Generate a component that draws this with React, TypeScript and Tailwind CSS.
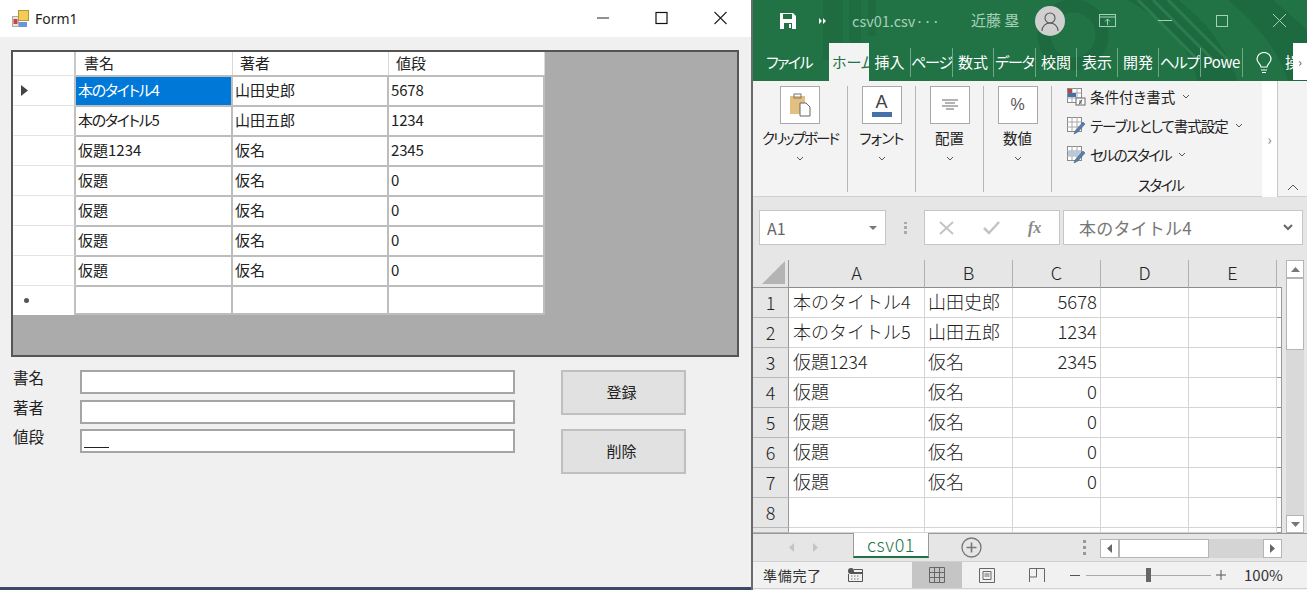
import React from "react";

const gridRows = [
  ["本のタイトル4", "山田史郎", "5678"],
  ["本のタイトル5", "山田五郎", "1234"],
  ["仮題1234", "仮名", "2345"],
  ["仮題", "仮名", "0"],
  ["仮題", "仮名", "0"],
  ["仮題", "仮名", "0"],
  ["仮題", "仮名", "0"],
  ["", "", ""],
];

const ribbonTabs = [
  { label: "挿入", w: "w-[42px]" },
  { label: "ページ", w: "w-[42px] tracking-[-1.200px]" },
  { label: "数式", w: "w-[41px]" },
  { label: "データ", w: "w-[42px] tracking-[-1.200px]" },
  { label: "校閲", w: "w-[41px]" },
  { label: "表示", w: "w-[41px]" },
  { label: "開発", w: "w-[41px]" },
  { label: "ヘルプ", w: "w-[42px] tracking-[-1.200px]" },
  { label: "Powe", w: "w-[42px] tracking-[-0.300px]" },
];

const FormIcon = () => (
  <svg width="17" height="18" viewBox="0 0 17 18" className="shrink-0">
    <rect x="0.5" y="6.500" width="6" height="10" fill="#e4e4e4" stroke="#aaa" />
    <rect x="1.500" y="9" width="4" height="5" fill="#d2403a" />
    <rect x="6.500" y="0.500" width="10" height="10" fill="#f2cc55" stroke="#b9953a" />
    <rect x="7" y="12" width="8" height="5" fill="#6a94dc" />
  </svg>
);

const Label = ({ text }: { text: string }) => (
  <div className="h-[29.5px] text-[15.500px] leading-[16px] text-[#222]">{text}</div>
);

const Field = ({ children }: { children?: React.ReactNode }) => (
  <div className="flex h-[24px] w-[435px] items-end border-2 border-[#a5a5a5] bg-white pb-[2px] pl-[2px]">{children}</div>
);

const FormWindow = () => (
  <div className="flex h-[587px] w-[751px] shrink-0 flex-col bg-[#f0f0f0]">
    <div className="flex h-[37px] shrink-0 items-center bg-white pl-[12px]">
      <FormIcon />
      <span className="ml-[6px] text-[14px] text-[#222] [font-family:'Noto_Sans',sans-serif]">Form1</span>
      <div className="ml-auto flex items-center">
        <svg width="60" height="37" viewBox="0 0 60 37"><path d="M25 18h12" stroke="#222" strokeWidth="1" /></svg>
        <svg width="59" height="37" viewBox="0 0 59 37"><rect x="24" y="12.5" width="11" height="11" fill="none" stroke="#111" strokeWidth="1.2" /></svg>
        <svg width="60" height="37" viewBox="0 0 60 37"><path d="M23.500 12l12 12M35.500 12l-12 12" stroke="#222" strokeWidth="1.1" /></svg>
      </div>
    </div>
    <div className="ml-[11px] mt-[13px] h-[307px] w-[728px] border-2 border-[#555] bg-[#ababab]">
      <div className="grid w-[532px] grid-cols-[63px_157px_156px_156px] bg-white text-[15px] text-[#222]">
        <div className="h-[23px] border-r-2 border-[#c8c8c8]" />
        {["書名", "著者", "値段"].map((h, i) => (
          <div key={h} className={`flex h-[23px] items-center border-r border-[#d8d8d8] ${i === 0 ? "pl-[8px]" : "pl-[7px]"}`}>{h}</div>
        ))}
        {gridRows.map((row, r) => (
          <React.Fragment key={r}>
            <div className="flex h-[30px] items-center border-t border-r-2 border-[#e3e3e3] border-r-[#c0c0c0] pl-[8px]">
              {r === 0 && (
                <svg width="7" height="11" viewBox="0 0 7 11"><path d="M0 0l7 5.500L0 11z" fill="#444" /></svg>
              )}
              {r === 7 && <span className="ml-[3px] h-[5px] w-[5px] rounded-full bg-[#555]" />}
            </div>
            {row.map((cell, c) => (
              <div
                key={c}
                className={`flex h-[30px] items-center border-r-2 border-t-2 border-[#bdbdbd] pb-[2px] pl-[2px] [font-feature-settings:'palt'] ${r === 7 ? "border-b-2" : ""} ${r === 0 && c === 0 ? "bg-[#0078d7] text-white" : ""} ${c === 2 ? "tracking-[-0.2px]" : ""} ${r < 2 && c === 0 ? "tracking-[-1.300px]" : ""}`}
              >
                {cell}
              </div>
            ))}
          </React.Fragment>
        ))}
      </div>
    </div>
    <div className="ml-[13px] mt-[13px] flex">
      <div className="-mt-[1px] w-[67px]">
        <Label text="書名" />
        <Label text="著者" />
        <Label text="値段" />
      </div>
      <div className="flex flex-col">
        <Field />
        <div className="mt-[6px]"><Field /></div>
        <div className="mt-[5px]">
          <Field>
            <span className="mb-[1px] block h-[1px] w-[25px] bg-[#222]" />
          </Field>
        </div>
      </div>
      <div className="ml-[46px] flex flex-col gap-[14px]">
        <button className="h-[45px] w-[125px] border-2 border-[#bfbfbf] bg-[#e1e1e1] pr-[4px] text-[15px] text-[#222]">登録</button>
        <button className="h-[45px] w-[125px] border-2 border-[#bfbfbf] bg-[#e1e1e1] pr-[4px] text-[15px] text-[#222]">削除</button>
      </div>
    </div>
  </div>
);

const Chevron = () => (
  <svg width="8" height="5" viewBox="0 0 8 5"><path d="M1 1l3 3 3-3" fill="none" stroke="#555" /></svg>
);

const RibbonGroup = ({ label, icon, className, labelClass = "" }: { label: string; icon: React.ReactNode; className: string; labelClass?: string }) => (
  <div className={`flex h-[106px] flex-col items-center border-r border-[#b5b5b5] ${className}`}>
    <div className="flex h-[38px] w-[40px] items-center justify-center border border-[#a9a9a9] bg-white">{icon}</div>
    <div className={`mt-[4px] whitespace-nowrap text-[14.500px] leading-[20px] text-[#222] [font-feature-settings:'palt'] ${labelClass}`}>{label}</div>
    <div className="mt-[8px] flex"><Chevron /></div>
  </div>
);

const StyleIcon = ({ kind }: { kind: number }) => (
  <svg width="19" height="18" viewBox="0 0 19 18" className="shrink-0">
    <rect x="0.5" y="0.5" width="14" height="14" fill="#fff" stroke="#8a8a8a" />
    <path d="M5 0v14M10 0v14M0 5h14M0 10h14" stroke="#a9a9a9" />
    {kind === 0 && (
      <>
        <rect x="1" y="1" width="4" height="4" fill="#b5473c" />
        <rect x="1" y="5" width="8" height="4" fill="#4472a8" />
        <rect x="9" y="10" width="9" height="7" fill="#fff" stroke="#666" />
        <path d="M12 13h3M12 15h3M15 11.5l-3 5" stroke="#444" strokeWidth="0.8" />
      </>
    )}
    {kind === 1 && <path d="M8 14L16 5l2 2-7 8-4 2z" fill="#4f7fb5" stroke="#555" strokeWidth="0.5" />}
    {kind === 2 && (
      <>
        <rect x="1" y="5" width="13" height="5" fill="#b9c8dc" />
        <path d="M8 14L16 5l2 2-7 8-4 2z" fill="#4f7fb5" stroke="#555" strokeWidth="0.5" />
      </>
    )}
  </svg>
);

const StyleItem = ({ label, kind, labelClass = "" }: { label: string; kind: number; labelClass?: string }) => (
  <div className="flex h-[29.5px] items-center whitespace-nowrap text-[14.500px] text-[#222] [font-feature-settings:'palt']">
    <StyleIcon kind={kind} />
    <span className={`ml-[4px] ${labelClass}`}>{label}</span>
    <span className="ml-[7px] flex"><Chevron /></span>
  </div>
);

const GreenPattern = () => (
  <svg className="absolute inset-0" width="555" height="81" viewBox="0 0 555 81">
    <path d="M70 0h20v60H70zM96 0h12v50H96zM115 0h8v36h-8z" fill="#1f6c41" />
    <path d="M375 0c50 30 60 50 70 81h40C470 40 450 20 425 0zM475 0c30 25 50 50 60 81h20V30L520 0z" fill="#1e6a40" />
    <circle cx="320" cy="35" r="29" fill="none" stroke="#1e6a40" strokeWidth="13" />
    <path d="M385 0l60 60M400 0l60 60M415 0l60 60" stroke="#2b7c4f" strokeWidth="3" />
  </svg>
);

const ExcelWindow = () => (
  <div className="flex h-[590px] min-w-0 flex-1 flex-col border-l-2 border-[#6a6a6a] bg-[#f3f3f3]">
    <div className="relative h-[81px] shrink-0 overflow-hidden bg-[#217346] text-white">
      <GreenPattern />
      <div className="relative flex h-[41px] items-center">
        <svg width="16" height="16" viewBox="0 0 16 16" className="ml-[27px]">
          <path d="M0 0h13l3 3v13H0z" fill="#fff" />
          <path d="M3 1h9v5H3z" fill="#217346" />
          <path d="M4 10h8v6H4z" fill="#217346" />
          <path d="M9 11h2v4H9z" fill="#fff" />
        </svg>
        <svg width="8" height="6" viewBox="0 0 8 6" className="ml-[23px]">
          <path d="M0 0l3 3-3 3zM4 0l3 3-3 3z" fill="#fff" />
        </svg>
        <span className="ml-[25px] w-[119px] whitespace-nowrap text-[14.500px] text-[#a6d0b8]">csv01.csv···</span>
        <span className="w-[64px] whitespace-nowrap text-[15px] text-[#a6d0b8]">近藤 塁</span>
        <div className="flex h-[30px] w-[30px] items-center justify-center rounded-full bg-[#d0d0d0]">
          <svg width="24" height="24" viewBox="0 0 24 24" fill="none" stroke="#555" strokeWidth="1.1">
            <circle cx="12" cy="9" r="5" />
            <path d="M4 22c0-5 4-8 8-8s8 3 8 8" />
          </svg>
        </div>
        <svg width="17" height="13" viewBox="0 0 17 13" className="ml-[34px]" fill="none" stroke="#a6d0b8">
          <rect x="0.5" y="0.5" width="16" height="12" />
          <path d="M0 3h17M8.500 11V5M6 7.500L8.500 5 11 7.500" />
        </svg>
        <span className="ml-[42px] h-[1px] w-[14px] bg-[#a6d0b8]" />
        <span className="ml-[44px] h-[12px] w-[12px] border border-[#a6d0b8]" />
        <svg width="13" height="13" viewBox="0 0 13 13" className="ml-[45px]"><path d="M0 0l13 13M13 0L0 13" stroke="#a6d0b8" /></svg>
      </div>
      <div className="relative flex h-[40px] items-end text-[15px] [font-feature-settings:'palt']">
        <div className="flex h-[38px] w-[72px] items-center justify-center tracking-[-1.500px]">ファイル</div>
        <div className="ml-[4px] flex h-[38px] w-[40px] shrink-0 items-center overflow-hidden whitespace-nowrap bg-[#f3f3f3] pl-[3px] text-[#217346]">ホーム</div>
        {ribbonTabs.map((t) => (
          <div key={t.label} className={`mb-[4px] flex h-[29px] shrink-0 items-center justify-center overflow-hidden whitespace-nowrap border-r border-[#6fa887] ${t.w}`}>
            {t.label}
          </div>
        ))}
        <div className="mb-[4px] flex h-[29px] w-[42px] shrink-0 items-center justify-center">
          <svg width="16" height="22" viewBox="0 0 16 22" fill="none" stroke="#fff" strokeWidth="1.2">
            <path d="M5 15c0-3-4-4-4-8a7 6.500 0 0 1 14 0c0 4-4 5-4 8z" />
            <path d="M5 18h6M6 20.500h4" />
          </svg>
        </div>
        <div className="mb-[4px] flex h-[29px] w-[8px] shrink-0 items-center overflow-hidden">操</div>
        <div className="mb-[1px] flex h-[37px] w-[14px] shrink-0 items-center justify-center self-end bg-white text-[12px] text-[#555]">›</div>
      </div>
    </div>

    <div className="flex h-[116px] shrink-0 border-b border-[#d0d0d0] pt-[5px]">
      <RibbonGroup
        label="クリップボード"
        className="w-[95px]"
        labelClass="tracking-[-1.900px]"
        icon={
          <svg width="22" height="24" viewBox="0 0 22 24">
            <rect x="1" y="3" width="15" height="18" fill="#e3bf82" />
            <rect x="5" y="1" width="7" height="4" fill="none" stroke="#777" />
            <path d="M11 10h6l4 4v9H11z" fill="#fff" stroke="#666" />
          </svg>
        }
      />
      <RibbonGroup
        label="フォント"
        className="w-[68px]"
        labelClass="tracking-[-0.800px]"
        icon={
          <div className="flex flex-col items-center leading-none">
            <span className="text-[18px] font-medium leading-[18px] text-[#444] [font-family:'Liberation_Sans',sans-serif]">A</span>
            <span className="mt-[1px] h-[5px] w-[20px] bg-[#4472a8]" />
          </div>
        }
      />
      <RibbonGroup
        label="配置"
        className="w-[68px]"
        icon={<svg width="18" height="12" viewBox="0 0 18 12"><path d="M1 1h16M4 4h10M1 7h16M5 10h8" stroke="#666" /></svg>}
      />
      <RibbonGroup
        label="数値"
        className="w-[68px]"
        icon={<span className="text-[16px] text-[#555] [font-family:'Liberation_Sans',sans-serif]">%</span>}
      />
      <div className="-mt-[4px] flex w-[210px] flex-col pl-[15px]">
        <StyleItem label="条件付き書式" kind={0} />
        <StyleItem label="テーブルとして書式設定" kind={1} labelClass="tracking-[-1px]" />
        <StyleItem label="セルのスタイル" kind={2} labelClass="tracking-[-1.800px]" />
        <div className="mt-[5px] pr-[8px] text-center text-[14.500px] tracking-[-1.800px] text-[#222] [font-feature-settings:'palt']">スタイル</div>
      </div>
      <div className="-mt-[5px] flex h-[116px] w-[16px] items-center justify-center border-r border-[#c8c8c8] bg-white text-[14px] text-[#777]">›</div>
      <div className="flex flex-1 items-end justify-center pb-[5px]">
        <svg width="12" height="7" viewBox="0 0 12 7"><path d="M1 6l5-5 5 5" fill="none" stroke="#555" /></svg>
      </div>
    </div>

    <div className="flex h-[63px] shrink-0 items-start bg-[#e6e6e6] pl-[6px] pt-[13px]">
      <div className="flex h-[35px] w-[127px] items-center justify-between border border-[#c6c6c6] bg-white pl-[7px] pr-[8px] text-[16px] text-[#666]">
        A1
        <svg width="8" height="4" viewBox="0 0 8 4"><path d="M0 0h8L4 4z" fill="#777" /></svg>
      </div>
      <div className="flex h-[35px] w-[38px] flex-col items-center justify-center gap-[2px]">
        <span className="h-[2px] w-[3px] bg-[#aaa]" /><span className="h-[3px] w-[3px] bg-[#aaa]" /><span className="h-[3px] w-[3px] bg-[#aaa]" />
      </div>
      <div className="flex h-[35px] w-[136px] items-center gap-[28px] border border-[#c6c6c6] bg-white pl-[14px]">
        <svg width="16" height="14" viewBox="0 0 16 14"><path d="M1 1l13 12M14 1L1 13" stroke="#c4c4c4" strokeWidth="2" /></svg>
        <svg width="17" height="14" viewBox="0 0 17 14"><path d="M1 7l5 5L16 1" fill="none" stroke="#c4c4c4" strokeWidth="2.500" /></svg>
        <span className="text-[16px] font-bold italic text-[#888] [font-family:'Liberation_Serif',serif]">fx</span>
      </div>
      <div className="ml-[3px] flex h-[35px] flex-1 items-center justify-between border border-[#c6c6c6] bg-white pl-[15px] pr-[9px] text-[17px] tracking-[0.2px] text-[#777]">
        本のタイトル4
        <svg width="10" height="7" viewBox="0 0 10 7"><path d="M1 1l4 4 4-4" fill="none" stroke="#666" strokeWidth="2" /></svg>
      </div>
      <div className="w-[4px]" />
    </div>

    <div className="flex h-[273px] shrink-0 overflow-hidden bg-[#e6e6e6]">
      <div className="w-[529px] shrink-0 overflow-hidden">
        <div className="grid grid-cols-[36px_136px_88px_88px_88px_88px_5px] grid-rows-[28px_repeat(8,30px)_5px]">
          <div className="flex items-end justify-end border-r border-b border-[#999] pb-[3px] pr-[3px]">
            <svg width="23" height="23" viewBox="0 0 23 23"><path d="M23 0v23H0z" fill="#b4b4b4" /></svg>
          </div>
          {["A", "B", "C", "D", "E"].map((c) => (
            <div key={c} className="flex items-center justify-center border-r border-b border-b-[#8c8c8c] border-r-[#b0b0b0] pb-[2px] text-[18px] font-light text-[#222]">{c}</div>
          ))}
          <div className="border-b border-[#8c8c8c]" />
          {gridRows.slice(0, 7).map((row, r) => (
            <React.Fragment key={r}>
              <div className="flex items-center justify-center border-r border-b border-[#b8b8b8] border-r-[#999] text-[18px] font-light text-[#222]">{r + 1}</div>
              <div className="flex items-center overflow-hidden whitespace-nowrap border-r border-b border-[#d4d4d4] bg-white pb-[2px] pl-[4px] text-[18px] font-light text-[#222]">{row[0]}</div>
              <div className="flex items-center overflow-hidden whitespace-nowrap border-r border-b border-[#d4d4d4] bg-white pb-[2px] pl-[3px] text-[18px] font-light text-[#222]">{row[1]}</div>
              <div className="flex items-center justify-end border-r border-b border-[#d4d4d4] bg-white pb-[2px] pr-[3px] text-[18.500px] font-light text-[#222]">{row[2]}</div>
              <div className="border-r border-b border-[#d4d4d4] bg-white" />
              <div className="border-r border-b border-[#d4d4d4] bg-white" />
              <div className="border-r border-b border-[#999] bg-white" />
            </React.Fragment>
          ))}
          {[0, 1].map((r) => (
            <React.Fragment key={r}>
              <div className="flex items-center justify-center border-r border-b border-[#b8b8b8] border-r-[#999] text-[18px] font-light text-[#222]">{r === 0 ? "8" : ""}</div>
              <div className="border-r border-b border-[#d4d4d4] bg-white" />
              <div className="border-r border-b border-[#d4d4d4] bg-white" />
              <div className="border-r border-b border-[#d4d4d4] bg-white" />
              <div className="border-r border-b border-[#d4d4d4] bg-white" />
              <div className="border-r border-b border-[#d4d4d4] bg-white" />
              <div className="border-r border-b border-[#999] bg-white" />
            </React.Fragment>
          ))}
        </div>
      </div>
      <div className="ml-[4px] flex w-[18px] flex-col">
        <div className="flex h-[18px] items-center justify-center border border-[#b5b5b5] bg-white">
          <svg width="9" height="5" viewBox="0 0 9 5"><path d="M0 5h9L4.500 0z" fill="#777" /></svg>
        </div>
        <div className="h-[72px] w-full border border-[#b5b5b5] bg-white" />
        <div className="flex-1 bg-[#d9d9d9]" />
        <div className="flex h-[18px] items-center justify-center border border-[#b5b5b5] bg-white">
          <svg width="9" height="5" viewBox="0 0 9 5"><path d="M0 0h9L4.500 5z" fill="#777" /></svg>
        </div>
      </div>
    </div>

    <div className="flex h-[28px] shrink-0 border-t border-[#999] bg-[#e6e6e6]">
      <div className="flex w-[100px] items-center justify-center gap-[19px] pb-[1px]">
        <svg width="5" height="9" viewBox="0 0 5 9"><path d="M5 0v9L0 4.500z" fill="#c4c4c4" /></svg>
        <svg width="5" height="9" viewBox="0 0 5 9"><path d="M0 0v9l5-4.500z" fill="#c4c4c4" /></svg>
      </div>
      <div className="-mt-[1px] flex h-[25px] w-[76px] items-center justify-center border-x border-[#999] border-b-2 border-b-[#217346] bg-white pb-[1px] text-[18px] font-light tracking-[0.6px] text-[#217346]">csv01</div>
      <div className="ml-[32px] flex items-center">
        <svg width="21" height="21" viewBox="0 0 21 21" fill="none" stroke="#777" strokeWidth="1.300">
          <circle cx="10.500" cy="10.500" r="9.500" />
          <path d="M10.500 5.500v10M5.500 10.500h10" strokeWidth="1.600" />
        </svg>
      </div>
      <div className="ml-[94px] flex w-[16px] flex-col items-center justify-center gap-[3px]">
        <span className="h-[3px] w-[3px] bg-[#999]" /><span className="h-[3px] w-[3px] bg-[#999]" /><span className="h-[3px] w-[3px] bg-[#999]" />
      </div>
      <div className="ml-[8px] mt-[5px] flex h-[19px] w-[182px]">
        <div className="flex w-[19px] items-center justify-center border border-[#b5b5b5] bg-white">
          <svg width="5" height="9" viewBox="0 0 5 9"><path d="M5 0v9L0 4.500z" fill="#666" /></svg>
        </div>
        <div className="w-[90px] border border-[#b5b5b5] bg-white" />
        <div className="flex-1 bg-[#d4d4d4]" />
        <div className="flex w-[19px] items-center justify-center border border-[#b5b5b5] bg-white">
          <svg width="5" height="9" viewBox="0 0 5 9"><path d="M0 0v9l5-4.500z" fill="#666" /></svg>
        </div>
      </div>
    </div>

    <div className="flex h-[28px] shrink-0 items-center border-y border-[#d0d0d0] bg-[#f1f1f1] text-[14px] text-[#333]">
      <span className="ml-[10px] w-[85px] tracking-[0.7px]">準備完了</span>
      <svg width="15" height="14" viewBox="0 0 15 14" fill="none">
        <circle cx="3" cy="3" r="3" fill="#555" />
        <path d="M6 1.500h8.500v12H.5V6" stroke="#555" />
        <path d="M3 5h11" stroke="#555" strokeWidth="2" />
        <path d="M3 8h9M3 11h9" stroke="#777" strokeDasharray="1.500 1.500" />
      </svg>
      <div className="ml-[49px] flex h-full w-[50px] items-center justify-center bg-[#c5c5c5]">
        <svg width="16" height="16" viewBox="0 0 16 16" fill="none" stroke="#666"><path d="M.5.5h15v15H.5zM5.500 0v16M10.500 0v16M0 5.500h16M0 10.500h16" /></svg>
      </div>
      <div className="flex w-[50px] justify-center">
        <svg width="16" height="15" viewBox="0 0 16 15" fill="none" stroke="#666"><path d="M.5.5h15v14H.5zM4 3.500h8v8H4zM5.500 6h5M5.500 8h5" /></svg>
      </div>
      <div className="flex w-[50px] justify-center">
        <svg width="16" height="15" viewBox="0 0 16 15" fill="none" stroke="#666"><path d="M.5 14V.5h15V14M.5 9h7V.5" /></svg>
      </div>
      <div className="ml-[8px] flex items-center">
        <span className="h-[1px] w-[10px] bg-[#555]" />
        <div className="ml-[6px] flex h-[14px] w-[125px] items-center">
          <div className="h-[1px] w-[60px] bg-[#aaa]" />
          <div className="h-[14px] w-[5px] bg-[#666]" />
          <div className="h-[1px] flex-1 bg-[#aaa]" />
        </div>
        <svg width="10" height="10" viewBox="0 0 10 10" className="ml-[5px]"><path d="M5 0v10M0 5h10" stroke="#555" /></svg>
        <span className="ml-[18px] text-[15px] text-[#333]">100%</span>
      </div>
    </div>
  </div>
);

export default function App() {
  return (
    <div className="flex h-[590px] w-[1307px] overflow-hidden bg-[#3b4a66] [font-family:'Noto_Sans_CJK_JP','Noto_Sans',sans-serif]">
      <FormWindow />
      <ExcelWindow />
    </div>
  );
}
